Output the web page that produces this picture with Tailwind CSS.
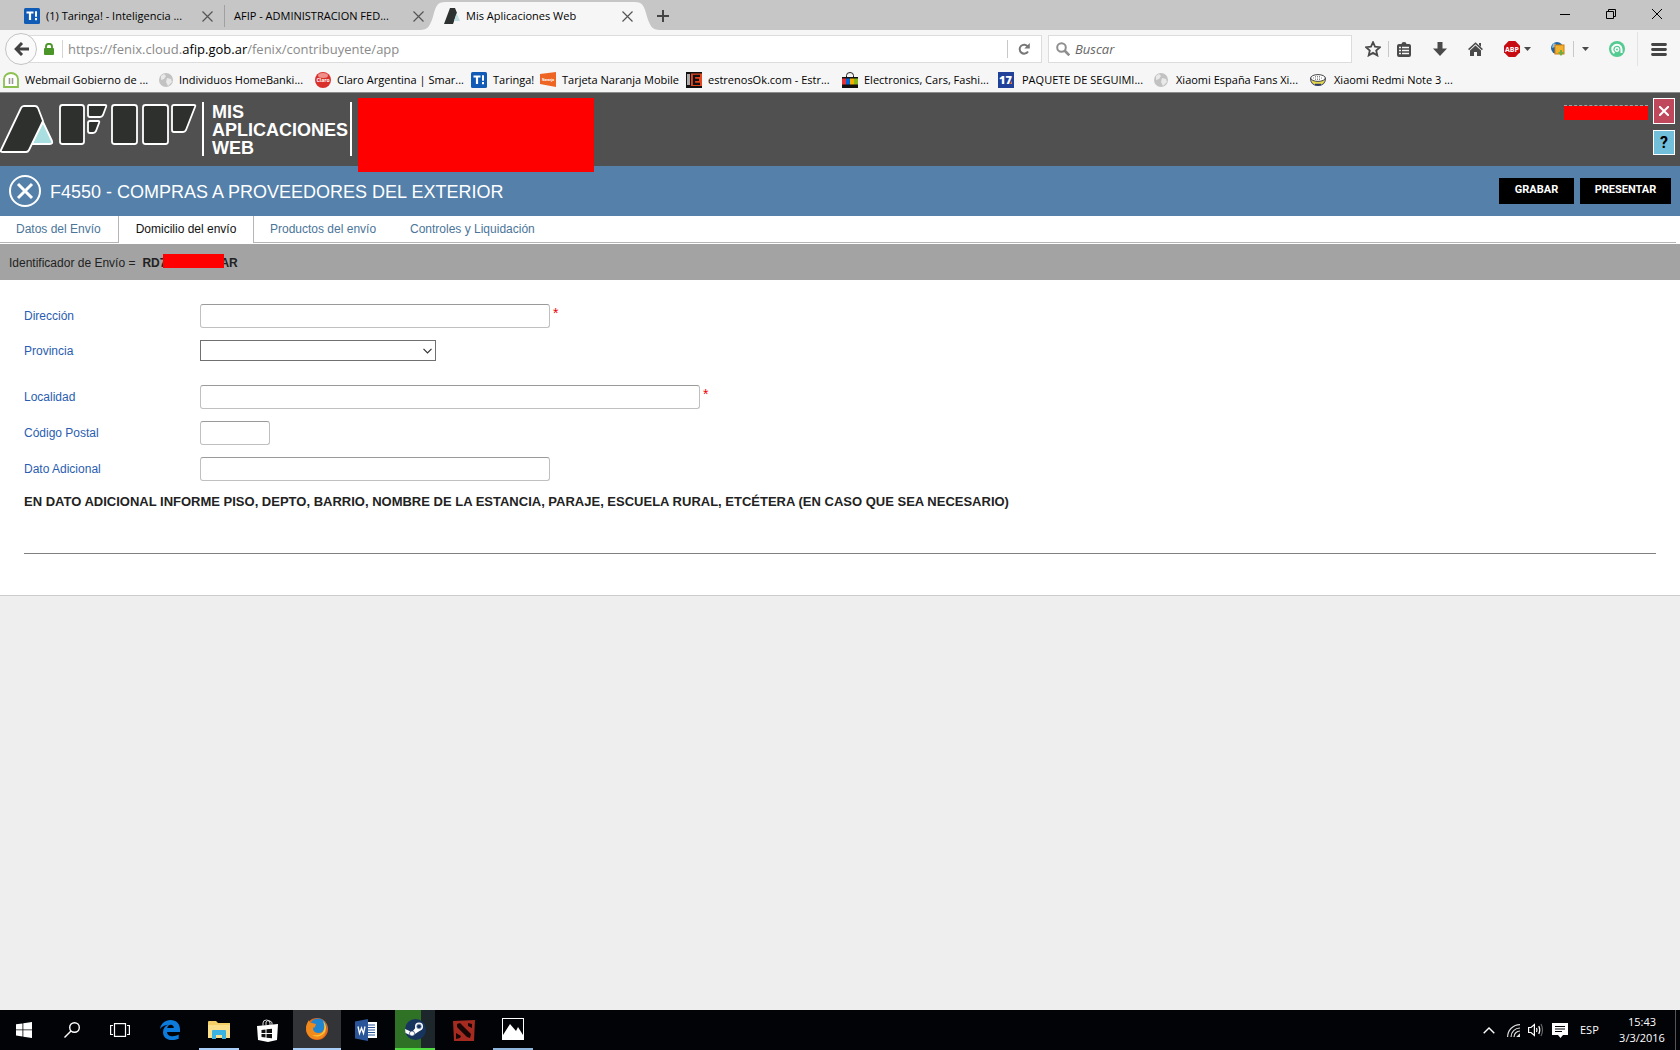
<!DOCTYPE html>
<html lang="es">
<head>
  <meta charset="UTF-8">
  <title>Mis Aplicaciones Web</title>
  <meta name="viewport" content="width=device-width, initial-scale=1.0">
  <script src="https://cdn.jsdelivr.net/npm/@tailwindcss/browser@4"></script>
</head>
<body class="h-screen flex flex-col bg-[#eeeeee] font-['Liberation_Sans',Arial,sans-serif] text-[12px] leading-4 text-[#222] overflow-hidden">

  <!-- Browser chrome -->
  <div class="shrink-0 font-['Open_Sans','Noto_Sans',sans-serif] text-[11px] text-black">
    <!-- Window tabs -->
    <div class="h-[30px] bg-[#c6c6c6] flex items-end">
      <div class="w-[225px] h-[28px] pl-6 pr-3 flex items-center gap-[6px] shrink-0 relative">
        <svg class="size-4 shrink-0" viewBox="0 0 16 16"><rect width="16" height="16" rx="1.5" fill="#0f5bb5"/><path d="M2.5 4.5h7M6 4.5V12" stroke="#fff" stroke-width="2.2"/><path d="M12 3.2v5.6M12 10v2.2" stroke="#fff" stroke-width="2"/></svg>
        <span class="flex-1 whitespace-nowrap">(1) Taringa! - Inteligencia ...</span>
        <button type="button" aria-label="Cerrar pestaña"><svg class="size-[11px]" viewBox="0 0 11 11" stroke="#555" stroke-width="1.2"><path d="M.5.5l10 10M10.500.5l-10 10"/></svg></button>
        <span class="absolute right-0 top-[3px] h-[22px] w-px bg-[#a0a0a0]"></span>
      </div>
      <div class="w-[207px] h-[28px] pl-[9px] pr-2 flex items-center gap-[6px] shrink-0">
        <span class="flex-1 whitespace-nowrap">AFIP - ADMINISTRACION FED...</span>
        <button type="button" aria-label="Cerrar pestaña"><svg class="size-[11px]" viewBox="0 0 11 11" stroke="#555" stroke-width="1.2"><path d="M.5.5l10 10M10.500.5l-10 10"/></svg></button>
      </div>
      <div class="w-[218px] h-[28px] pl-[12px] pr-[17px] flex items-center gap-[6px] shrink-0 relative">
        <svg class="absolute left-[-12px] top-0 w-[240px] h-[28px]" viewBox="0 0 242 28" preserveAspectRatio="none"><path d="M0 28C8 28 10 24 13 15C16 4 17 0 26 0H216C225 0 226 4 229 15C232 24 234 28 242 28Z" fill="#f6f6f6"/></svg>
        <svg class="size-4 shrink-0 relative" viewBox="0 0 16 16"><path d="M6 0h5l2 5-4 11H0z" fill="#2d3230"/><path d="M12.500 5l3.500 8h-6z" fill="#bfdfe2"/></svg>
        <span class="flex-1 whitespace-nowrap relative">Mis Aplicaciones Web</span>
        <button type="button" class="relative" aria-label="Cerrar pestaña"><svg class="size-[11px]" viewBox="0 0 11 11" stroke="#555" stroke-width="1.2"><path d="M.5.5l10 10M10.500.5l-10 10"/></svg></button>
      </div>
      <button type="button" class="h-[28px] pl-[7px]" aria-label="Nueva pestaña"><svg class="size-3 relative" viewBox="0 0 12 12"><path d="M6 0v12M0 6h12" stroke="#444" stroke-width="2"/></svg></button>
      <div class="flex-1 h-[28px] flex justify-end items-center gap-9 pr-[18px] pb-1">
        <button type="button" aria-label="Minimizar"><svg class="size-[10px]" viewBox="0 0 10 10"><path d="M0 5.500h10" stroke="#000"/></svg></button>
        <button type="button" aria-label="Restaurar"><svg class="size-[10px]" viewBox="0 0 10 10" fill="none" stroke="#000"><path d="M.5 2.500h7v7h-7zM2.500 2.500v-2h7v7h-2"/></svg></button>
        <button type="button" aria-label="Cerrar"><svg class="size-[10px]" viewBox="0 0 10 10" stroke="#000"><path d="M0 0l10 10M10 0L0 10"/></svg></button>
      </div>
    </div>

    <!-- Address bar -->
    <div class="h-[38px] bg-[#f6f6f6] flex items-center pr-[13px]">
      <button type="button" class="ml-[5px] size-8 rounded-full border border-[#c4c4c4] bg-[#fafafa] flex items-center justify-center shrink-0 relative z-10" aria-label="Atrás">
        <svg class="w-[15px] h-[14px]" viewBox="0 0 15 14" fill="none" stroke="#424242" stroke-width="3"><path d="M8 1L2.200 7L8 13M2.500 7H15"/></svg>
      </button>
      <div class="-ml-4 pl-[22px] h-[28px] flex-1 bg-white border border-[#dcdcdc] flex items-center">
        <svg class="w-[10px] h-[12px] shrink-0" viewBox="0 0 10 12"><rect y="5" width="10" height="7" rx="1" fill="#4a9628"/><path d="M2 6V3.500a3 2.700 0 0 1 6 0V6" fill="none" stroke="#4a9628" stroke-width="1.800"/></svg>
        <span class="w-px h-[18px] bg-[#d5d5d5] ml-2 mr-[5px]"></span>
        <span class="flex-1 text-[13px] text-[#8a8a8a] whitespace-nowrap">https://fenix.cloud.<span class="text-black">afip.gob.ar</span>/fenix/contribuyente/app</span>
        <button type="button" class="h-[18px] w-[34px] border-l border-[#c8c8c8] pr-[2px] flex items-center justify-center" aria-label="Recargar"><svg class="size-[12px]" viewBox="0 0 12 12"><path d="M9.800 3.500A4.500 4.500 0 1 0 10 8.500" fill="none" stroke="#777" stroke-width="2"/><path d="M11.800 0v5.500H6.300z" fill="#777"/></svg></button>
      </div>
      <div class="ml-[6px] h-[28px] w-[304px] bg-white border border-[#dcdcdc] flex items-center gap-[5px] pl-[7px]">
        <svg class="size-[14px] shrink-0" viewBox="0 0 14 14" fill="none" stroke="#8e8e8e"><circle cx="5.500" cy="5.500" r="4.300" stroke-width="2"/><path d="M8.500 8.500l4.800 4.800" stroke-width="2.600"/></svg>
        <input type="text" placeholder="Buscar" aria-label="Buscar" class="flex-1 text-[13px] italic outline-none placeholder:text-[#666]">
      </div>
      <div class="flex items-center shrink-0 text-[#4a4a4a]">
        <button type="button" class="ml-[13px]" aria-label="Marcador"><svg class="size-4" viewBox="0 0 16 16" fill="none" stroke="#4a4a4a" stroke-width="1.800"><path d="M8 1.200l2 4.500 4.900.5-3.700 3.300 1.100 4.900L8 11.900l-4.300 2.500 1.100-4.900-3.700-3.300 4.900-.5z"/></svg></button>
        <span class="ml-[7px] w-px h-4 bg-[#c8c8c8]"></span>
        <button type="button" class="ml-2" aria-label="Lista"><svg class="w-[14px] h-[15px]" viewBox="0 0 14 15"><path d="M0 4a2 2 0 0 1 2-2h2.500a2.500 2 0 0 1 5 0H12a2 2 0 0 1 2 2v9a2 2 0 0 1-2 2H2a2 2 0 0 1-2-2z" fill="#4a4a4a"/><path d="M2 5.500h2M5 5.500h7M2 8.500h2M5 8.500h7M2 11.500h2M5 11.500h7" stroke="#f6f6f6" stroke-width="1.600"/></svg></button>
        <button type="button" class="ml-[22px]" aria-label="Descargas"><svg class="w-[14px] h-[14px]" viewBox="0 0 14 14" fill="#4a4a4a"><path d="M4.500 0h5v6.500H14L7 14 0 6.500h4.500z"/></svg></button>
        <button type="button" class="ml-[21px]" aria-label="Inicio"><svg class="w-[15px] h-[14px]" viewBox="0 0 15 14" fill="#4a4a4a"><path d="M7.500 3.500L13 8.500V14H9v-4H6v4H2V8.500z"/><path d="M.6 7.600L7.500 1.200l6.900 6.400" fill="none" stroke="#4a4a4a" stroke-width="1.500"/><path d="M11 1h2v4l-2-2z"/></svg></button>
        <button type="button" class="ml-[21px] flex items-center gap-1" aria-label="Adblock Plus">
          <svg class="size-4" viewBox="0 0 16 16"><path d="M4.700 0h6.600L16 4.700v6.600L11.300 16H4.700L0 11.300V4.700z" fill="#c70d12"/><text x="8" y="10.500" text-anchor="middle" font-size="7" font-weight="700" fill="#fff">ABP</text></svg>
          <svg class="w-[7px] h-1" viewBox="0 0 7 4"><path d="M0 0h7L3.500 4z" fill="#4a4a4a"/></svg>
        </button>
        <button type="button" class="ml-5" aria-label="Complemento"><svg class="size-[14px]" viewBox="0 0 14 14"><circle cx="6" cy="6" r="6" fill="#24649f"/><path d="M2 1l3 1-1 3-3 1z" fill="#8bc0e0"/><rect x="4" y="3" width="9" height="9" fill="#f3b02c" stroke="#d07c10"/><path d="M9 8h2v2h2l-3 4-3-4h2z" fill="#6cae3f"/></svg></button>
        <span class="ml-2 w-px h-4 bg-[#c8c8c8]"></span>
        <svg class="ml-2 w-[7px] h-1" viewBox="0 0 7 4"><path d="M0 0h7L3.500 4z" fill="#4a4a4a"/></svg>
        <button type="button" class="ml-5" aria-label="Extensión"><svg class="size-4" viewBox="0 0 16 16"><circle cx="8" cy="8" r="8" fill="#53cb91"/><path d="M5.500 12.200A4.600 4.600 0 1 1 12.500 8v4" fill="none" stroke="#fff" stroke-width="2"/><circle cx="8" cy="8.500" r="1.700" fill="none" stroke="#fff" stroke-width="1.500"/></svg></button>
        <span class="ml-3 w-px h-[34px] bg-[#e2e2e2]"></span>
        <button type="button" class="ml-[13px]" aria-label="Menú"><svg class="w-4 h-[13px]" viewBox="0 0 16 13"><path d="M1.500 1.500h13M1.500 6.500h13M1.500 11.500h13" stroke="#444" stroke-width="2.800" stroke-linecap="round"/></svg></button>
      </div>
    </div>

    <!-- Bookmarks -->
    <div class="h-[25px] bg-[#f6f6f6] border-b border-[#8c8c8c] flex items-center pl-[3px] whitespace-nowrap">
      <a href="#" class="w-[156px] shrink-0 flex items-center gap-[6px]"><svg class="size-4 shrink-0" viewBox="0 0 16 16"><path d="M1 15V7a7 6 0 0 1 14 0v8z" fill="#fff" stroke="#8cc152" stroke-width="1.800"/><path d="M6.500 6v6M9.500 6v6" stroke="#999" stroke-width="1.600"/></svg>Webmail Gobierno de ...</a>
      <a href="#" class="w-[156px] shrink-0 flex items-center gap-[6px]"><svg class="size-[14px] shrink-0" viewBox="0 0 14 14"><circle cx="7" cy="7" r="7" fill="#c2c2c2"/><path d="M2 3l3-2 2 2-2 3-3 1zM8 5l4 1 1 3-4 4-2-4z" fill="#e9e9e9"/></svg>Individuos HomeBanki...</a>
      <a href="#" class="w-[156px] shrink-0 flex items-center gap-[6px]"><svg class="size-4 shrink-0" viewBox="0 0 16 16"><circle cx="8" cy="8" r="8" fill="#d9302c"/><ellipse cx="8" cy="3.500" rx="5" ry="2.500" fill="#ef8f8a"/><text x="8" y="10" text-anchor="middle" font-size="5" font-weight="700" fill="#fff">Claro</text></svg>Claro Argentina | Smar...</a>
      <a href="#" class="w-[69px] shrink-0 flex items-center gap-[6px]"><svg class="size-4 shrink-0" viewBox="0 0 16 16"><rect width="16" height="16" rx="1.500" fill="#0f5bb5"/><path d="M2.500 4.500h7M6 4.500V12" stroke="#fff" stroke-width="2.200"/><path d="M12 3.200v5.600M12 10v2.200" stroke="#fff" stroke-width="2"/></svg>Taringa!</a>
      <a href="#" class="w-[146px] shrink-0 flex items-center gap-[6px]"><svg class="size-4 shrink-0" viewBox="0 0 16 16"><path d="M0 2l16-2v15L0 12z" fill="#ee6523"/><text x="8" y="9" text-anchor="middle" font-size="3" font-weight="700" fill="#fff">Naranja</text></svg>Tarjeta Naranja Mobile</a>
      <a href="#" class="w-[156px] shrink-0 flex items-center gap-[6px]"><svg class="size-4 shrink-0" viewBox="0 0 16 16"><rect width="16" height="16" fill="#111"/><path d="M1 2h3v11H1z" fill="#aaa"/><rect x="5" y="1.500" width="11" height="12.500" fill="#e2451d"/><path d="M14 3.800H8v8h6M8 7.800h5" fill="none" stroke="#111" stroke-width="2.200"/></svg>estrenosOk.com - Estr...</a>
      <a href="#" class="w-[156px] shrink-0 flex items-center gap-[6px]"><svg class="size-4 shrink-0" viewBox="0 0 16 16"><path d="M4.500 5V3.500a3.500 3 0 0 1 7 0V5" fill="none" stroke="#222"/><rect y="5" width="16" height="11" fill="#111"/><path d="M0 6.500h4v6H0z" fill="#e53238"/><path d="M4 6.500h4v6H4z" fill="#0064d2"/><path d="M8 6.500h4v6H8z" fill="#f5af02"/><path d="M12 6.500h4v6h-4z" fill="#86b817"/></svg>Electronics, Cars, Fashi...</a>
      <a href="#" class="w-[156px] shrink-0 flex items-center gap-2"><svg class="size-4 shrink-0" viewBox="0 0 16 16"><rect width="16" height="16" fill="#21409a"/><text x="7.500" y="12" text-anchor="middle" font-size="11" font-weight="800" fill="#fff">17</text><path d="M12 12h2V9z" fill="#ee7a22"/></svg>PAQUETE DE SEGUIMI...</a>
      <a href="#" class="w-[156px] shrink-0 flex items-center gap-2"><svg class="size-[14px] shrink-0" viewBox="0 0 14 14"><circle cx="7" cy="7" r="7" fill="#c2c2c2"/><path d="M2 3l3-2 2 2-2 3-3 1zM8 5l4 1 1 3-4 4-2-4z" fill="#e9e9e9"/></svg>Xiaomi España Fans Xi...</a>
      <a href="#" class="flex items-center gap-2"><svg class="w-4 h-3 shrink-0" viewBox="0 0 16 12"><path d="M.5 4q0 7.500 7.500 7.500T15.500 4z" fill="#e4d74c" stroke="#333a66"/><ellipse cx="8" cy="4" rx="7.300" ry="3.400" fill="#fff" stroke="#444"/><path d="M3 4h10M5 2.500h6M5 5.500h6" stroke="#888" stroke-dasharray="1 1"/><path d="M5 10.500h6" stroke="#333a66" stroke-width="1.500"/></svg>Xiaomi Redmi Note 3 ...</a>
    </div>
  </div>

  <!-- AFIP header -->
  <header class="shrink-0 h-[73px] bg-[#505050] flex items-start relative">
    <svg class="mt-[10px] w-[198px] h-[50px] shrink-0" viewBox="0 0 198 50" fill="#2d302d" stroke="#fff" stroke-width="1.800" stroke-linejoin="round">
      <path d="M43 19L52 38Q53 41 50 41H31Z" fill="#a9dfe1"/>
      <path d="M24 3h11q2 0 3 2l5 13-14 29q-1 2-3 2H3q-3 0-2-2L21 5q1-2 3-2z"/>
      <rect x="60" y="2" width="24" height="39" rx="2.500"/>
      <path d="M89 2h16q2 0 1 2l-3 8q-1 2-3 2H90q-2 0-2-2V4q0-2 1-2z"/>
      <path d="M90 18h8q2 0 1 2l-3 8q-1 2-3 2h-3q-2 0-2-2v-8q0-2 2-2z"/>
      <rect x="112" y="2" width="25" height="39" rx="2.500"/>
      <rect x="143" y="2" width="25" height="39" rx="2.500"/>
      <path d="M174 2h20q2 0 1 2l-9 23q-1 2-3 2h-9q-2 0-2-2V4q0-2 2-2z"/>
    </svg>
    <div class="ml-1 mt-[9px] h-[54px] w-[150px] border-x-2 border-white pl-2 pt-px">
      <h1 class="font-bold text-[18px] leading-[18px] text-white">MIS<br>APLICACIONES<br>WEB</h1>
    </div>
    <div class="absolute left-[358px] top-[5px] w-[236px] h-[74px] bg-[#ff0000]"></div>
    <div class="ml-auto mr-[5px] mt-[12px] w-[84px] h-[15px] bg-[#ff0000] bg-clip-padding border-t border-dashed border-[#a8a0a0]"></div>
    <div class="mt-[5px] mr-[5px] flex flex-col gap-[6px]">
      <button type="button" class="w-[22px] h-[26px] border border-white bg-[#c0485c] flex items-center justify-center" aria-label="Salir"><svg class="size-[10px]" viewBox="0 0 10 10" stroke="#fff" stroke-width="2"><path d="M0 0l10 10M10 0L0 10"/></svg></button>
      <button type="button" class="w-[22px] h-[25px] border border-white bg-[#72bfdc] text-black font-['Roboto',sans-serif] font-bold text-[16px]">?</button>
    </div>
  </header>

  <!-- Form title -->
  <div class="shrink-0 h-[50px] bg-[#5480aa] flex items-center pl-[9px] pr-[9px] gap-[6px] text-white">
    <button type="button" aria-label="Cerrar formulario"><svg class="size-8" viewBox="0 0 32 32" fill="none" stroke="#fff"><circle cx="16" cy="16" r="15" stroke-width="2"/><path d="M9 9l14 14M23 9L9 23" stroke-width="3"/></svg></button>
    <h2 class="ml-[3px] pt-[2px] flex-1 text-[18px] leading-6">F4550 - COMPRAS A PROVEEDORES DEL EXTERIOR</h2>
    <button type="button" class="h-[26px] w-[75px] bg-black font-['Roboto',sans-serif] font-bold text-[11px] pb-[2px]">GRABAR</button>
    <button type="button" class="h-[26px] w-[91px] bg-black font-['Roboto',sans-serif] font-bold text-[11px] pb-[2px]">PRESENTAR</button>
  </div>

  <!-- Section tabs -->
  <nav class="shrink-0 h-7 bg-white flex pb-px pr-1 text-[#4b7599]">
    <a href="#" class="w-[118px] pl-4 border-b border-[#b5b5b5] leading-[26px]">Datos del Envío</a>
    <a href="#" class="w-[136px] text-center border-x border-[#b5b5b5] leading-[26px] text-[#111]">Domicilio del envío</a>
    <a href="#" class="w-[140px] pl-4 border-b border-[#b5b5b5] leading-[26px]">Productos del envío</a>
    <a href="#" class="flex-1 pl-4 border-b border-[#b5b5b5] leading-[26px]">Controles y Liquidación</a>
  </nav>
  <div class="shrink-0 h-9 bg-[#a3a3a3] flex items-center pl-[9px] pt-[2px]">
    <span>Identificador de Envío =</span>
    <strong class="ml-[7px] flex items-center relative">RD7<span class="w-[54px]"></span>AR
      <span class="absolute left-[21px] -top-px w-[61px] h-[14px] bg-[#ff0000]"></span>
    </strong>
  </div>

  <!-- Address form -->
  <main class="shrink-0 bg-white border-b border-[#cccccc] px-6 pt-6 pb-[41px]">
    <form class="flex flex-col gap-3 text-[#2a5db0]">
      <div class="flex items-center h-6">
        <label for="direccion" class="w-[176px]">Dirección</label>
        <input id="direccion" type="text" class="w-[350px] h-6 px-1 rounded-[3px] border border-[#c0c0c0] border-t-[#9a9a9a]">
        <span class="ml-[3px] pb-[6px] text-[14px] text-[#ee0000]">*</span>
      </div>
      <div class="flex items-center h-[21px] mb-3">
        <label for="provincia" class="w-[176px]">Provincia</label>
        <div class="relative flex">
          <select id="provincia" class="appearance-none w-[236px] h-[21px] border border-[#707070] bg-white"><option></option></select>
          <svg class="absolute right-1 top-2 w-[9px] h-[6px] pointer-events-none" viewBox="0 0 9 6"><path d="M.5.800l4 4 4-4" fill="none" stroke="#333" stroke-width="1.200"/></svg>
        </div>
      </div>
      <div class="flex items-center h-6">
        <label for="localidad" class="w-[176px]">Localidad</label>
        <input id="localidad" type="text" class="w-[500px] h-6 px-1 rounded-[3px] border border-[#c0c0c0] border-t-[#9a9a9a]">
        <span class="ml-[3px] pb-[6px] text-[14px] text-[#ee0000]">*</span>
      </div>
      <div class="flex items-center h-6">
        <label for="postal" class="w-[176px]">Código Postal</label>
        <input id="postal" type="text" class="w-[70px] h-6 px-1 rounded-[3px] border border-[#c0c0c0] border-t-[#9a9a9a]">
      </div>
      <div class="flex items-center h-6">
        <label for="adicional" class="w-[176px]">Dato Adicional</label>
        <input id="adicional" type="text" class="w-[350px] h-6 px-1 rounded-[3px] border border-[#c0c0c0] border-t-[#9a9a9a]">
      </div>
    </form>
    <p class="mt-[13px] font-bold text-[13px]">EN DATO ADICIONAL INFORME PISO, DEPTO, BARRIO, NOMBRE DE LA ESTANCIA, PARAJE, ESCUELA RURAL, ETCÉTERA (EN CASO QUE SEA NECESARIO)</p>
    <hr class="mt-[43px] border-[#808080]">
  </main>

  <!-- Windows taskbar -->
  <footer class="mt-auto shrink-0 h-10 bg-[#020307] flex text-white font-['Open_Sans','Noto_Sans',sans-serif] text-[11px]">
    <button type="button" class="w-12 flex items-center justify-center" aria-label="Inicio"><svg class="size-4" viewBox="0 0 16 16" fill="#fff"><path d="M0 2.300l6.500-.9v6.100H0zM7.300 1.300L16 0v7.500H7.300zM0 8.300h6.500v6.200L0 13.600zM7.300 8.300H16V16l-8.700-1.300z"/></svg></button>
    <button type="button" class="w-12 flex items-center justify-center" aria-label="Buscar"><svg class="size-4" viewBox="0 0 16 16" fill="none" stroke="#fff" stroke-width="1.400"><circle cx="10.500" cy="5.500" r="4.800"/><path d="M7 9L.5 15.500"/></svg></button>
    <button type="button" class="w-12 flex items-center justify-center" aria-label="Vista de tareas"><svg class="w-5 h-[14px]" viewBox="0 0 20 14" fill="none" stroke="#fff" stroke-width="1.200"><rect x="4.500" y=".6" width="11" height="12.800"/><path d="M3 2.500H.6v9H3M17 2.500h2.400v9H17"/></svg></button>
    <button type="button" class="w-[51px] flex items-center justify-center" aria-label="Edge"><svg class="size-5" viewBox="0 0 20 20"><path d="M0 9C1 3.500 5 0 10.500 0 16.500 0 20 4 20 9.500V12H7c.2 3 2.600 4.300 5.500 4.300 2.300 0 4.300-.6 6.200-1.700v4.200C16.700 19.600 14.300 20 12 20 6.500 20 3 17 3 12.200 3 9 4.800 6.300 8 4.800 4.700 5 2 6.500 0 9zM7.200 8h6.600c0-2-1-3.300-3.100-3.300C8.700 4.700 7.500 6 7.200 8z" fill="#0c7bdc"/></svg></button>
    <button type="button" class="w-12 flex justify-center items-center relative" aria-label="Explorador"><svg class="w-[22px] h-[18px]" viewBox="0 0 22 18"><path d="M0 1q0-1 1-1h7l2 2h12v15H0z" fill="#f3cf68"/><path d="M0 4h22v13H0z" fill="#fbe08b"/><path d="M4 18v-8q0-1 1-1h12q1 0 1 1v8h-4v-4H8v4z" fill="#3bb4e3"/></svg><span class="absolute bottom-0 left-1 right-1 h-[2px] bg-[#a9cff8]"></span></button>
    <button type="button" class="w-12 flex justify-center items-center" aria-label="Tienda"><svg class="w-[21px] h-[23px]" viewBox="0 0 21 23"><path d="M0 7l21-2-1 16-9 2-10-2z" fill="#fff"/><path d="M6 7V4q0-3 3.500-3T13 4v2M9 6V3q1-2 4-1t2 4" fill="none" stroke="#ddd"/><path d="M4.500 11l4-.5v3.500h-4zM9.500 10.300l5.500-.6V14H9.500zM4.500 15h4v3.500l-4-.5zM9.500 15H15v4.300l-5.500-.6z" fill="#111"/></svg></button>
    <button type="button" class="w-12 ml-[2px] bg-[#333437] border-b-2 border-[#a9cff8] flex justify-center items-center" aria-label="Firefox"><svg class="size-[22px]" viewBox="0 0 22 22"><circle cx="11" cy="11" r="11" fill="#e7691c"/><circle cx="12" cy="9" r="8.500" fill="#2185cf"/><path d="M3 2c0 2 1 3 3 3l4 1-1 3-2 1c0 4 3 5 6 5 4 0 6-4 5-8 2 2 3 8-1 12-3 3-9 3-13 0C-1 15-1 7 3 2z" fill="#f18a1d"/><path d="M17 3c4 3 4 10 0 13-3 3-8 3-11 1 5 1 10 0 12-5 1-4 0-6-1-9z" fill="#fbc73a"/></svg></button>
    <button type="button" class="w-[49px] flex justify-center items-center" aria-label="Word"><svg class="w-[22px] h-[22px]" viewBox="0 0 22 22"><rect x="11" y="3" width="11" height="16" fill="#fff"/><path d="M13 6h7M13 8.500h7M13 11h7M13 13.500h7M13 16h7" stroke="#2a5699" stroke-width="1.200"/><path d="M0 2.500L13 0v22L0 19.500z" fill="#2a5699"/><path d="M3 7.500l1.500 7L6.500 9l2 5.500 1.500-7" fill="none" stroke="#fff" stroke-width="1.300"/></svg></button>
    <button type="button" class="w-10 ml-[5px] bg-[#1c262b] border-b-2 border-[#4fdc3f] flex justify-center items-center relative" aria-label="Steam"><span class="absolute left-0 inset-y-0 w-[26px] bg-[#2f7226]"></span><svg class="size-[21px] relative" viewBox="0 0 21 21"><circle cx="10.500" cy="10.500" r="10.500" fill="#17345f"/><path d="M0 10l7 3 5-6 4 4-6 4-2 2-3-1-4.500-2z" fill="#fff"/><circle cx="14" cy="7.500" r="4" fill="#fff"/><circle cx="14" cy="7.500" r="2.400" fill="#17345f" stroke="#9fb3cc" stroke-width=".8"/><circle cx="7" cy="14.500" r="2.600" fill="#fff" stroke="#17345f" stroke-width=".7"/></svg></button>
    <button type="button" class="w-[49px] ml-1 flex justify-center items-center" aria-label="Dota 2"><svg class="w-[22px] h-[21px]" viewBox="0 0 22 21"><path d="M0 1l22-1-1 21H1z" fill="#a52a20"/><path d="M4 4l3-1 11 11-1 4-3-1L4 7zM15 3l4 1v4l-4-2zM3 13l5 3-1 2-4 1z" fill="#160605"/></svg></button>
    <button type="button" class="w-10 ml-[5px] border-b-2 border-[#8fb6dd] flex justify-center items-center" aria-label="Fotos"><svg class="size-[22px]" viewBox="0 0 22 22"><rect x=".5" y=".5" width="21" height="21" fill="#020307" stroke="#fff"/><path d="M1 17l7-11 6 7 2-4 5 8v4H1z" fill="#fff"/></svg></button>

    <div class="ml-auto flex items-center">
      <button type="button" aria-label="Iconos ocultos"><svg class="w-3 h-[7px]" viewBox="0 0 12 7"><path d="M.7 6.300L6 1l5.300 5.300" fill="none" stroke="#fff" stroke-width="1.400"/></svg></button>
      <svg class="ml-3 size-[13px]" viewBox="0 0 13 13" fill="none" stroke="#ddd" stroke-width="1.200"><path d="M.6 13A12.400 12.400 0 0 1 13 .6M4 13a9 9 0 0 1 9-9M7 13a6 6 0 0 1 6-6"/><path d="M10 13h3v-3z" fill="#fff"/></svg>
      <svg class="ml-2 w-4 h-[14px]" viewBox="0 0 16 14" fill="none" stroke="#fff" stroke-width="1.200"><path d="M.6 4.500H3L6.400 1.500v11L3 9.500H.6z"/><path d="M8.500 5q1 2 0 4M10.800 3q2 4 0 8"/><path d="M13 1q3 6 0 12" stroke="#666"/></svg>
      <svg class="ml-2 w-4 h-[15px]" viewBox="0 0 16 15"><path d="M0 0h16v12h-5l-2.500 3L6 12H0z" fill="#fff"/><path d="M3 3.500h10M3 6h10M3 8.500h7" stroke="#020307"/></svg>
      <span class="ml-3 w-[21px]">ESP</span>
      <div class="ml-4 w-[50px] text-center leading-4">15:43<br>3/3/2016</div>
      <span class="ml-2 mr-1 w-px h-10 bg-[#555]"></span>
    </div>
  </footer>
</body>
</html>
